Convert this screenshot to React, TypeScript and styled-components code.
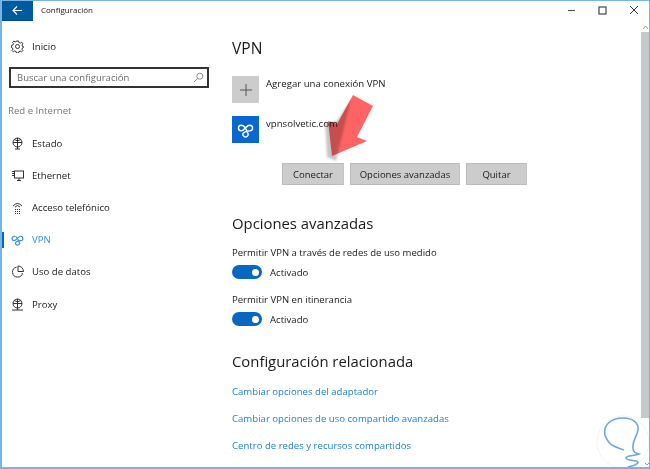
import React from "react";
import styled, { createGlobalStyle } from "styled-components";

const Global = createGlobalStyle`
  html, body { margin: 0; padding: 0; background: #fff; }
  body { font-family: "Open Sans", "Noto Sans", sans-serif; }
`;

const Win = styled.div`
  position: relative;
  width: 650px; height: 469px; box-sizing: border-box;
  border: 1px solid #76b5e8; border-left-width: 2px; border-bottom-width: 2px;
  background: #fff; overflow: hidden; display: flex; flex-direction: column;
`;
const TitleBar = styled.div`
  height: 20px; display: flex; align-items: center; flex: none; color: #1a1a1a;
`;
const BackBtn = styled.div`
  width: 31px; height: 20px; background: #005a9e; border-bottom: 1px solid #004a88; box-sizing: border-box;
  display: flex; align-items: center; justify-content: center;
`;
const WinTitle = styled.div`
  margin: 0 0 3px 8px; font-size: 8px; flex: 1;
`;
const WinCtl = styled.div`
  width: 31px; height: 20px; padding-bottom: 2px; box-sizing: border-box;
  display: flex; align-items: center; justify-content: center;
`;
const Body = styled.div`
  flex: 1; display: flex; min-height: 0;
`;
const Side = styled.div`
  width: 230px; flex: none; display: flex; flex-direction: column; padding-top: 15px; box-sizing: border-box;
`;
const Home = styled.div`
  display: flex; align-items: center; height: 20px; padding-left: 9px; gap: 8px;
  font-size: 9.7px; color: #1a1a1a;
`;
const Search = styled.div`
  margin: 11px 0 0 7px; width: 200px; height: 21px; box-sizing: border-box;
  border: 2px solid #333; display: flex; align-items: center; justify-content: space-between;
  padding: 0 3px 0 6px; font-size: 9.5px; color: #6b6b6b;
`;
const Group = styled.div`
  margin: 14px 0 7px 6px; font-size: 9.6px; height: 18px; line-height: 18px; color: #777;
`;
const NavRow = styled.div<{ $active?: boolean }>`
  height: 32.2px; display: flex; align-items: center; gap: 8px; padding-left: 6px; box-sizing: border-box;
  font-size: 9.6px; color: ${p => (p.$active ? "#2f8fdc" : "#1a1a1a")};
  border-left: 3px solid transparent; position: relative;
  &::before {
    content: ""; display: ${p => (p.$active ? "block" : "none")};
    position: absolute; left: -3px; top: 8px; width: 2px; height: 16px; background: #0a67c0;
  }
`;
const Main = styled.div`
  flex: 1; padding-top: 17px; min-width: 0;
`;
const H1 = styled.div`
  font-size: 15.6px; line-height: 21px; color: #1a1a1a;
`;
const TileRow = styled.div<{ $top: number }>`
  display: flex; gap: 7px; margin-top: ${p => p.$top}px; font-size: 9.65px; color: #1a1a1a; height: 27px;
  line-height: 15px;
`;
const Tile = styled.div<{ $bg: string }>`
  width: 27px; height: 27px; background: ${p => p.$bg}; display: flex; align-items: center; justify-content: center;
`;
const Btns = styled.div`
  display: flex; gap: 6px; margin: 20px 0 0 50px;
`;
const Btn = styled.div<{ $w: number }>`
  width: ${p => p.$w}px; height: 22px; box-sizing: border-box; background: #cccccc; border: 1px solid #bbb;
  border-right-color: #c4c4c4;
  display: flex; align-items: center; justify-content: center; font-size: 9.5px; color: #1a1a1a;
`;
const H2 = styled.div<{ $top: number }>`
  font-size: 14.85px; line-height: 22px; margin-top: ${p => p.$top}px; color: #1a1a1a;
`;
const Label = styled.div<{ $top: number }>`
  font-size: 9.55px; line-height: 14px; margin-top: ${p => p.$top}px; color: #1a1a1a;
`;
const ToggleRow = styled.div`
  display: flex; align-items: center; gap: 8px; margin-top: 5px; height: 14px; font-size: 9.6px; color: #1a1a1a;
`;
const Toggle = styled.div`
  position: relative; width: 30px; height: 14px; border-radius: 7px; background: #0a67c0;
  &::after { content: ""; position: absolute; right: 3.5px; top: 3.5px; width: 7px; height: 7px; border-radius: 50%; background: #fff; }
`;
const Link = styled.div<{ $top: number }>`
  font-size: 9.6px; line-height: 14px; margin-top: ${p => p.$top}px; color: #1f80cf;
`;
const Scroll = styled.div`
  position: absolute; right: 0; top: 22px; width: 8px; height: 395px; display: flex; flex-direction: column; align-items: center;
`;
const Thumb = styled.div`
  width: 8px; flex: 1; margin-top: 2px; background: #c8c8c8;
`;
const Overlay = styled.svg`
  position: absolute; pointer-events: none;
`;
const ArrowOverlay = styled(Overlay)`
  left: 318px; top: 90px;
`;
const MarkOverlay = styled(Overlay)`
  right: 0; bottom: 0;
`;
const ArrowHead = styled.polygon`
  mix-blend-mode: multiply;
`;

const Ic = ({ children }: { children: React.ReactNode }) => (
  <svg width="13" height="13" viewBox="0 0 13 13" fill="none" stroke="#333" strokeWidth="1" style={{ flex: "none" }}>
    {children}
  </svg>
);

const VpnGlyph = ({ c, w, s }: { c: string; w: number; s: number }) => (
  <svg width={w} height={w} viewBox="0 0 20 20" fill="none" stroke={c} strokeWidth={s} style={{ flex: "none" }}>
    <path d="M12.500 14C11.500 11 9 5 5 5A3.300 3.300 0 0 0 5 11.600C7.500 11.600 9 9 10 8C11 7 12.500 5 15 5A3.300 3.300 0 0 1 15 11.600C12 11.600 9.500 12 7.500 14" />
    <path d="M7.500 14A3 3 0 1 0 12.500 14" />
  </svg>
);

export default function App() {
  return (
    <Win>
      <Global />
      <TitleBar>
        <BackBtn>
          <svg width="11" height="11" viewBox="0 0 11 11" fill="none" stroke="#fff" strokeWidth="1.1">
            <path d="M10 5.5H1M5 1.5L1 5.5L5 9.5" />
          </svg>
        </BackBtn>
        <WinTitle>Configuración</WinTitle>
        <WinCtl>
          <svg width="9" height="9" viewBox="0 0 9 9" stroke="#555" strokeWidth="1.2"><path d="M1 4.5H8" /></svg>
        </WinCtl>
        <WinCtl>
          <svg width="9" height="9" viewBox="0 0 9 9" fill="none" stroke="#444" strokeWidth="1.2"><rect x="1" y="1" width="7" height="7" /></svg>
        </WinCtl>
        <WinCtl>
          <svg width="10" height="10" viewBox="0 0 10 10" stroke="#333" strokeWidth="1"><path d="M1 1L9 9M9 1L1 9" /></svg>
        </WinCtl>
      </TitleBar>
      <Body>
        <Side>
          <Home>
            <Ic>
              <circle cx="6.5" cy="6.5" r="2" />
              <path d="M5.500 1h2l.4 1.500 1.400.6 1.400-.8 1.200 1.400-.9 1.300.4 1.500 1.400.5-1.400.9-.4 1.400.9 1.300-1.300 1.300-1.400-.8-1.400.6-.3 1.300h-2l-.4-1.400-1.400-.6-1.300.8-1.300-1.300.8-1.300-.5-1.400L.5 7.500v-2l1.400-.4.5-1.500-.8-1.300 1.300-1.200 1.300.8 1.400-.6z" />
            </Ic>
            Inicio
          </Home>
          <Search>
            Buscar una configuración
            <svg width="11" height="11" viewBox="0 0 11 11" fill="none" stroke="#888"><circle cx="6.800" cy="4.200" r="3" /><path d="M4.600 6.400L1 10" /></svg>
          </Search>
          <Group>Red e Internet</Group>
          <NavRow>
            <Ic><circle cx="6.500" cy="5.500" r="4.500" /><path d="M2 5.500H11M6.500 1V10M3 2.500Q6.500 5 10 2.500M4 12H9M6.500 10V12" /></Ic>
            Estado
          </NavRow>
          <NavRow>
            <Ic><rect x="3.500" y="2" width="9" height="7" /><path d="M6 11.500H10M8 9V11.500M1 2.500H3M1 4.500H3M1 6.500H3" /></Ic>
            Ethernet
          </NavRow>
          <NavRow>
            <Ic><path d="M2 5Q6.500 0 11 5M4 6Q6.500 3 9 6" /><path d="M4 8.500H9M4 10.500H9M4 12.500H9" strokeDasharray="1 1" /></Ic>
            Acceso telefónico
          </NavRow>
          <NavRow $active>
            <VpnGlyph c="#2f8fdc" w={13} s={1.8} />
            VPN
          </NavRow>
          <NavRow>
            <Ic><path d="M5.500 2.200A5 5 0 1 0 11.500 8" /><path d="M7 1V6.500H12.500A5.500 5.500 0 0 0 7 1Z" /></Ic>
            Uso de datos
          </NavRow>
          <NavRow>
            <Ic><circle cx="6.500" cy="5.500" r="4.500" /><path d="M2 5.500H11M6.500 1V10M3 2.500Q6.500 5 10 2.500M1 12H12M6.500 10V12" /></Ic>
            Proxy
          </NavRow>
        </Side>
        <Main>
          <H1>VPN</H1>
          <TileRow $top={17}>
            <Tile $bg="#cccccc">
              <svg width="12" height="12" viewBox="0 0 12 12" stroke="#555"><path d="M6 0V12M0 6H12" /></svg>
            </Tile>
            Agregar una conexión VPN
          </TileRow>
          <TileRow $top={13}>
            <Tile $bg="#0a67d0"><VpnGlyph c="#fff" w={17} s={1.7} /></Tile>
            vpnsolvetic.com
          </TileRow>
          <Btns>
            <Btn $w={62}>Conectar</Btn>
            <Btn $w={110}>Opciones avanzadas</Btn>
            <Btn $w={61}>Quitar</Btn>
          </Btns>
          <H2 $top={27}>Opciones avanzadas</H2>
          <Label $top={12}>Permitir VPN a través de redes de uso medido</Label>
          <ToggleRow><Toggle />Activado</ToggleRow>
          <Label $top={14}>Permitir VPN en itinerancia</Label>
          <ToggleRow><Toggle />Activado</ToggleRow>
          <H2 $top={24}>Configuración relacionada</H2>
          <Link $top={13}>Cambiar opciones del adaptador</Link>
          <Link $top={13}>Cambiar opciones de uso compartido avanzadas</Link>
          <Link $top={13}>Centro de redes y recursos compartidos</Link>
        </Main>
      </Body>
      <Scroll>
        <svg width="7" height="5" viewBox="0 0 7 5" fill="none" stroke="#999" style={{ marginTop: 2, flex: "none" }}><path d="M1 4L3.500 1L6 4" /></svg>
        <Thumb />
      </Scroll>
      <ArrowOverlay width="70" height="80" viewBox="0 0 70 80">
        <path d="M31 8L17 30L5 32L7 66L16 70Z" fill="#000" opacity="0.22" style={{ filter: "blur(1.2px)" }} />
        <ArrowHead points="33,4 53,15 37,46 47,50 12,65 8,30 17,33" fill="#ff6464" />
      </ArrowOverlay>
      <MarkOverlay width="60" height="60" viewBox="0 0 60 60">
        <circle cx="34" cy="35" r="26" fill="#fff" stroke="#e4e4e4" strokeDasharray="1 1" />
        <path d="M35 43C28 40 20 40 16 28C14 18 22 11 34 11C44 11 50 16 49 23C48 30 43 33 44 41C44 45 46 46 50 47C46 49 37 48 37 51C37 54 48 53 49 55C49 58 43 59 39 60" fill="none" stroke="#6fa5dc" strokeWidth="1.6" />
        <path d="M56 56L58 58L60 56" fill="none" stroke="#999" />
      </MarkOverlay>
    </Win>
  );
}
